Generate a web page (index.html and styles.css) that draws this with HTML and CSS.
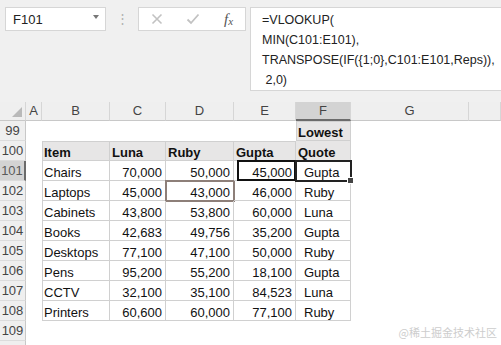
FILE: index.html
```html
<!DOCTYPE html>
<html>
<head>
    <meta name="viewport" content="width=device-width, initial-scale=1.0">
    <title>Lowest Quote</title>
    <link rel="stylesheet" href="styles.css">
</head>
<body>
    <div class="formula-bar">
        <div class="name-box">
            <span>F101</span>
            <span class="caret"></span>
        </div>
        <div class="grip">⋮</div>
        <div class="fx-box">
            <svg width="12" height="12" viewBox="0 0 12 12"><path d="M1.5 1.5 L10.5 10.5 M10.5 1.5 L1.5 10.5" stroke="#c2c2c2" stroke-width="1.6" fill="none"/></svg>
            <svg width="14" height="12" viewBox="0 0 14 12"><path d="M1.5 6.5 L5 10 L12.5 1.5" stroke="#c2c2c2" stroke-width="1.8" fill="none"/></svg>
            <span class="fx">f<span>x</span></span>
        </div>
        <div class="formula">=VLOOKUP(
MIN(C101:E101),
TRANSPOSE(IF({1;0},C101:E101,Reps)),
 2,0)</div>
    </div>

    <div class="sheet" id="sheet">
        <!-- cellules générées par le script -->
    </div>

    <div class="watermark">@稀土掘金技术社区</div>

    <script>
        const letters = ['A', 'B', 'C', 'D', 'E', 'F', 'G', ''];

        const items = [
            ['Chairs', '70,000', '50,000', '45,000', 'Gupta'],
            ['Laptops', '45,000', '43,000', '46,000', 'Ruby'],
            ['Cabinets', '43,800', '53,800', '60,000', 'Luna'],
            ['Books', '42,683', '49,756', '35,200', 'Gupta'],
            ['Desktops', '77,100', '47,100', '50,000', 'Ruby'],
            ['Pens', '95,200', '55,200', '18,100', 'Gupta'],
            ['CCTV', '32,100', '35,100', '84,523', 'Luna'],
            ['Printers', '60,600', '60,000', '77,100', 'Ruby']
        ];

        function cell(cls, text) {
            return `<div class="c ${cls}">${text || ''}</div>`;
        }

        function renderSheet() {
            let html = '<div class="ch corner"><svg width="10" height="10" viewBox="0 0 10 10"><path d="M10 0 L10 10 L0 10 Z" fill="#b9b9b9"/></svg></div>';
            letters.forEach(l => {
                html += `<div class="ch${l === 'F' ? ' active' : ''}">${l}</div>`;
            });

            for (let r = 99; r <= 110; r++) {
                // la ligne 110 est coupée par le bas de l'écran
                const label = r < 110 ? r : '';
                html += `<div class="rh${r === 101 ? ' active' : ''}">${label}</div>`;
                html += cell('');

                if (r === 99) {
                    html += cell('') + cell('') + cell('') + cell('');
                    html += cell('t top first hd', 'Lowest');
                } else if (r === 100) {
                    html += cell('t top first hd', 'Item');
                    html += cell('t top hd', 'Luna');
                    html += cell('t top hd', 'Ruby');
                    html += cell('t top hd', 'Gupta');
                    html += cell('t hd', 'Quote');
                } else if (r <= 108) {
                    const row = items[r - 101];
                    html += cell('t first', row[0]);
                    html += cell('t num', row[1]);
                    html += cell('t num' + (r === 102 ? ' mark' : ''), row[2]);
                    html += cell('t num' + (r === 101 ? ' boxed' : ''), row[3]);
                    html += cell('t pick' + (r === 101 ? ' sel' : ''), row[4]);
                } else {
                    html += cell('') + cell('') + cell('') + cell('') + cell('');
                }

                html += cell('') + cell('');
            }

            document.getElementById('sheet').innerHTML = html;
        }

        renderSheet();
    </script>
</body>
</html>
```

FILE: styles.css
```css
:root {
    --bar-bg: #f0f0f0;
    --box-border: #d6d6d6;
    --head-bg: #efefef;
    --head-line: #c8c8c8;
    --grid-line: #d0d0d0;
    --title-bg: #e7e6e6;
    --text-color: #111;
}

body {
    margin: 0;
    font-family: 'Liberation Sans', Arial, sans-serif;
    background: #fff;
    color: var(--text-color);
    position: relative;
    height: 345px;
    overflow: hidden;
}

/* barre de formule */
.formula-bar {
    height: 102px;
    background: var(--bar-bg);
    display: flex;
    align-items: flex-start;
    padding: 7px 0 0 5px;
    box-sizing: border-box;
}

.name-box {
    width: 101px;
    height: 24px;
    background: #fff;
    border: 1px solid var(--box-border);
    box-sizing: border-box;
    display: flex;
    align-items: center;
    justify-content: space-between;
    padding: 0 6px 0 7px;
    font-size: 13px;
    color: #222;
}

.caret {
    width: 0;
    height: 0;
    border-left: 3.5px solid transparent;
    border-right: 3.5px solid transparent;
    border-top: 4px solid #777;
    margin-top: -4px;
}

.grip {
    width: 32px;
    text-align: center;
    color: #b0b0b0;
    font-size: 13px;
    line-height: 24px;
}

.fx-box {
    width: 108px;
    height: 24px;
    background: #fff;
    border: 1px solid var(--box-border);
    box-sizing: border-box;
    display: flex;
    align-items: center;
    justify-content: space-around;
}

.fx {
    font-family: 'Liberation Serif', serif;
    font-style: italic;
    font-size: 15px;
    color: #555;
}

.fx span {
    font-size: 11px;
    vertical-align: -1px;
}

.formula {
    margin-left: 4px;
    flex: 1;
    height: 84px;
    background: #fff;
    border: 1px solid var(--box-border);
    border-right: none;
    box-sizing: border-box;
    padding: 2px 0 0 11px;
    font-size: 12.5px;
    line-height: 20px;
    color: #222;
    white-space: pre;
}

/* feuille */
.sheet {
    display: grid;
    grid-template-columns: 26px 16px 68px 56px 68px 62px 55px 118px 1fr;
    grid-template-rows: 19px;
    grid-auto-rows: 20px;
    font-size: 13px;
}

.ch {
    background: var(--head-bg);
    border-right: 1px solid #d6d6d6;
    border-bottom: 1px solid var(--head-line);
    box-sizing: border-box;
    text-align: center;
    line-height: 18px;
    color: #444;
}

.ch.corner {
    display: flex;
    align-items: flex-end;
    justify-content: flex-end;
    padding: 0 3px 3px 0;
}

.ch.active {
    background: #d3d3d3;
    border-bottom: 2px solid #6b6b6b;
}

.rh {
    background: var(--head-bg);
    border-right: 1px solid var(--head-line);
    border-bottom: 1px solid #dcdcdc;
    box-sizing: border-box;
    text-align: center;
    line-height: 20px;
    color: #444;
}

.rh.active {
    background: #d3d3d3;
    border-right: 2px solid #6b6b6b;
    color: #5a5a5a;
}

.c {
    box-sizing: border-box;
    padding: 4px 3px 0 2px;
    line-height: 16px;
    white-space: nowrap;
}

.t {
    border-right: 1px solid var(--grid-line);
    border-bottom: 1px solid var(--grid-line);
}

.t.first {
    border-left: 1px solid var(--grid-line);
    padding-left: 1px;
}

.t.top {
    border-top: 1px solid var(--grid-line);
    padding-top: 3px;
}

.hd {
    background: var(--title-bg);
    font-weight: bold;
}

.num {
    text-align: right;
}

.pick {
    padding-left: 8px;
}

/* sélections */
.sel {
    position: relative;
    outline: 2px solid #222;
    outline-offset: -1px;
    z-index: 1;
}

.sel::after {
    content: '';
    position: absolute;
    right: -4px;
    bottom: -4px;
    width: 5px;
    height: 5px;
    background: #444;
    border: 1px solid #fff;
}

.boxed {
    position: relative;
}

.boxed::before {
    content: '';
    position: absolute;
    left: 3px;
    top: -1px;
    right: -1px;
    bottom: -1px;
    border: 2px solid #111;
}

.mark {
    outline: 2px solid #8d7f79;
    outline-offset: -1px;
}

.watermark {
    position: absolute;
    right: 4px;
    bottom: 5px;
    font-family: 'Noto Sans CJK SC', sans-serif;
    font-size: 11px;
    color: #cdcdcd;
}
```
